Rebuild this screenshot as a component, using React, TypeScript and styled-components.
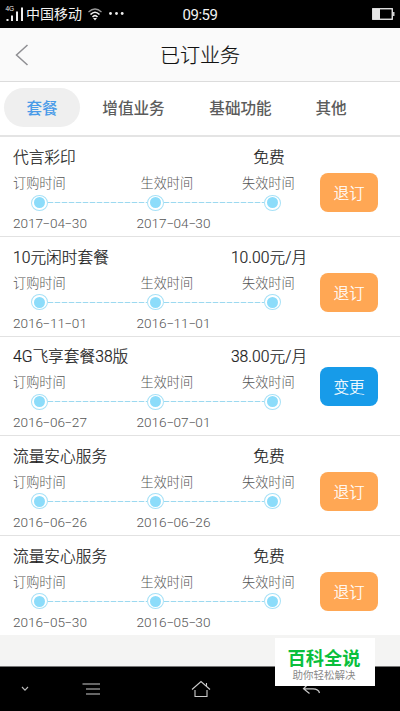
import React from "react";
import styled, { createGlobalStyle } from "styled-components";

const GlobalStyle = createGlobalStyle`
  * { box-sizing: border-box; }
  body {
    margin: 0;
    background: #000;
    font-family: "Noto Sans CJK SC", sans-serif;
  }
`;

const Screen = styled.div`
  width: 400px;
  height: 711px;
  display: flex;
  flex-direction: column;
  overflow: hidden;
  background: #f4f4f3;
`;

const StatusBar = styled.div`
  flex: none;
  height: 28px;
  display: grid;
  grid-template-columns: 1fr auto 1fr;
  align-items: center;
  padding: 0 5px;
  background: #000;
  color: #f2f2f2;
`;

const StatusLeft = styled.div`
  display: flex;
  align-items: center;
`;

const Carrier = styled.span`
  font-size: 14px;
  line-height: 24px;
  margin: 0 0 3px 2px;
  width: 62px;
  white-space: nowrap;
`;

const Clock = styled.span`
  font: 15px/26px Roboto, sans-serif;
  letter-spacing: -0.5px;
  padding-top: 1px;
`;

const StatusRight = styled.div`
  display: flex;
  justify-content: flex-end;
  padding-bottom: 1px;
`;

const Header = styled.header`
  flex: none;
  height: 54px;
  display: grid;
  grid-template-columns: 60px 1fr 60px;
  align-items: center;
  background: #fafafa;
  border-bottom: 1px solid #dcdcdc;
`;

const BackButton = styled.button`
  display: flex;
  padding: 0 0 0 15px;
  border: 0;
  background: none;
`;

const PageTitle = styled.h1`
  margin: 0;
  font-size: 20px;
  line-height: 52px;
  font-weight: 300;
  text-align: center;
  color: #111;
  -webkit-text-stroke: 0.2px #111;
`;

const Tabs = styled.nav`
  flex: none;
  height: 55px;
  display: flex;
  align-items: center;
  padding: 0 0 3px 4px;
  background: #fff;
  border-bottom: 2px solid #e4e4e4;
`;

const Tab = styled.button<{ $width: number; $active?: boolean }>`
  width: ${(p) => p.$width}px;
  height: 39px;
  padding: 0 0 1px;
  border: 0;
  border-radius: 20px;
  background: ${(p) => (p.$active ? "#efefef" : "transparent")};
  color: ${(p) => (p.$active ? "#4a9be8" : "#5c5c5c")};
  font: 500 15.6px/38px "Noto Sans CJK SC", sans-serif;
  white-space: nowrap;
`;

const List = styled.main`
  flex: none;
  background: #fff;
`;

const Row = styled.section<{ $first: boolean }>`
  height: ${(p) => (p.$first ? 100 : 99.7)}px;
  display: flex;
  padding: ${(p) => (p.$first ? 7 : 6.6)}px 0 0 13px;
  border-bottom: 1px solid #e2e2e2;
  &:last-child {
    height: 98.8px;
    border-bottom: 0;
  }
`;

const Details = styled.div`
  width: 307px;
`;

const NameLine = styled.div`
  display: grid;
  grid-template-columns: 205px 102px;
  height: 26px;
  line-height: 28.5px;
  font-family: Roboto, "Noto Sans CJK SC", sans-serif;
  font-size: 15.7px;
  font-weight: 300;
  color: #1c1c1c;
  -webkit-text-stroke: 0.2px #1c1c1c;
`;

const Name = styled.span`
  white-space: nowrap;
`;

const Price = styled.span`
  text-align: center;
  white-space: nowrap;
`;

const Labels = styled.div`
  display: grid;
  grid-template-columns: 127.5px 101.5px 60px;
  height: 25px;
  line-height: 25px;
  font-size: 13.2px;
  font-weight: 300;
  color: #555;
`;

const Track = styled.div`
  display: flex;
  align-items: center;
  height: 17px;
  margin-top: -1px;
  padding-left: 18px;
`;

const Dot = styled.i`
  flex: none;
  display: flex;
  width: 17px;
  height: 16px;
  padding: 1.5px 2px;
  border: 1px solid #a6e1f7;
  border-radius: 50%;
  background: #fff;
  &::before {
    content: "";
    flex: 1;
    border-radius: 50%;
    background: #8cdcfa;
  }
`;

const Dash = styled.i`
  width: 99.4px;
  height: 1px;
  background: repeating-linear-gradient(90deg, #9cd9f0 0 5px, #e4f5fb 5px 7px);
`;

const Dates = styled.div`
  display: grid;
  grid-template-columns: 123.5px 120px;
  height: 25px;
  line-height: 25px;
  font-family: Roboto, sans-serif;
  font-size: 13.6px;
  font-weight: 300;
  color: #555;
`;

const Hyphen = styled.span`
  display: inline-block;
  width: 6.8px;
  text-align: center;
  transform: scaleX(1.7);
`;

const Action = styled.button<{ $primary?: boolean; $top: number }>`
  width: 58px;
  height: 39px;
  margin-top: ${(p) => p.$top}px;
  padding: 0 0 1px;
  border: 0;
  border-radius: 8px;
  background: ${(p) => (p.$primary ? "#179be9" : "#ffa754")};
  color: #fff;
  font: 300 15.6px/38px "Noto Sans CJK SC", sans-serif;
  -webkit-text-stroke: 0.2px #fff;
`;

const Bottom = styled.footer`
  position: relative;
  margin-top: auto;
  flex: none;
  height: 45px;
  background: #000;
  border-top: 1px solid #777;
  display: grid;
  grid-template-columns: 29px 75px 107px 110px;
  align-items: center;
`;

const NavIcon = styled.span`
  display: flex;
  justify-content: flex-end;
`;

const Badge = styled.aside`
  position: absolute;
  left: 275px;
  top: -29px;
  width: 100px;
  height: 48px;
  display: flex;
  flex-direction: column;
  align-items: center;
  padding: 9px 2px 0 0;
  background: #fff;
  white-space: nowrap;
`;

const BadgeName = styled.div`
  font-size: 18.3px;
  line-height: 20px;
  font-weight: 700;
  color: #0abf3c;
`;

const BadgeNote = styled.div`
  margin-top: 1px;
  font-size: 10.5px;
  line-height: 13px;
  color: #888;
`;

interface Plan {
  name: string;
  price: string;
  start: string;
  effective: string;
  change?: boolean;
}

const plans: Plan[] = [
  { name: "代言彩印", price: "免费", start: "2017-04-30", effective: "2017-04-30" },
  { name: "10元闲时套餐", price: "10.00元/月", start: "2016-11-01", effective: "2016-11-01" },
  { name: "4G飞享套餐38版", price: "38.00元/月", start: "2016-06-27", effective: "2016-07-01", change: true },
  { name: "流量安心服务", price: "免费", start: "2016-06-26", effective: "2016-06-26" },
  { name: "流量安心服务", price: "免费", start: "2016-05-30", effective: "2016-05-30" },
];

function DateText({ value }: { value: string }) {
  const [year, month, day] = value.split("-");
  return (
    <span>
      {year}
      <Hyphen>-</Hyphen>
      {month}
      <Hyphen>-</Hyphen>
      {day}
    </span>
  );
}

function SignalIcon() {
  return (
    <svg width="19" height="18" viewBox="0 0 19 18" fill="#eee">
      <text x="0.5" y="6" fontSize="6.5" fontFamily="Liberation Sans">4G</text>
      <rect x="1.5" y="14" width="2" height="2" />
      <rect x="6" y="10.5" width="2" height="5.5" />
      <rect x="11" y="6.5" width="2" height="9.5" />
      <rect x="16" y="2.5" width="2" height="13.5" />
    </svg>
  );
}

function WifiIcon() {
  return (
    <svg width="36" height="14" viewBox="0 0 36 14" fill="none" stroke="#eee" strokeWidth="1.6">
      <path d="M0.5 5Q7 -1 13.5 5" stroke="#999" strokeWidth="1.2" />
      <path d="M2.5 7.5Q7 3 11.5 7.5" />
      <path d="M4.5 10Q7 7.3 9.5 10" />
      <path d="M5 11H9L7 13.5Z" fill="#eee" stroke="none" />
      <g fill="#eee" stroke="none">
        <circle cx="22.5" cy="6.5" r="1.4" />
        <circle cx="28.5" cy="6.5" r="1.4" />
        <circle cx="34.2" cy="6.5" r="1.4" />
      </g>
    </svg>
  );
}

export default function App() {
  return (
    <>
      <GlobalStyle />
      <Screen>
        <StatusBar>
          <StatusLeft>
            <SignalIcon />
            <Carrier>中国移动</Carrier>
            <WifiIcon />
          </StatusLeft>
          <Clock>09:59</Clock>
          <StatusRight>
            <svg width="23" height="12" viewBox="0 0 23 12">
              <rect x="0.75" y="0.75" width="19.5" height="10.5" fill="none" stroke="#f2f2f2" strokeWidth="1.3" />
              <rect x="1" y="1" width="7" height="10" fill="#e6e6e6" />
              <rect x="21" y="4" width="1.5" height="4" fill="#ccc" />
            </svg>
          </StatusRight>
        </StatusBar>
        <Header>
          <BackButton aria-label="返回">
            <svg width="14" height="22" viewBox="0 0 14 22" fill="none" stroke="#8f8f93" strokeWidth="1.5">
              <path d="M12.5 1L1.5 11L12.5 21" />
            </svg>
          </BackButton>
          <PageTitle>已订业务</PageTitle>
        </Header>
        <Tabs>
          <Tab $active $width={76}>套餐</Tab>
          <Tab $width={107}>增值业务</Tab>
          <Tab $width={107}>基础功能</Tab>
          <Tab $width={74}>其他</Tab>
        </Tabs>
        <List>
          {plans.map((plan, i) => (
            <Row key={i} $first={i === 0}>
              <Details>
                <NameLine>
                  <Name>{plan.name}</Name>
                  <Price>{plan.price}</Price>
                </NameLine>
                <Labels>
                  <span>订购时间</span>
                  <span>生效时间</span>
                  <span>失效时间</span>
                </Labels>
                <Track>
                  <Dot />
                  <Dash />
                  <Dot />
                  <Dash />
                  <Dot />
                </Track>
                <Dates>
                  <DateText value={plan.start} />
                  <DateText value={plan.effective} />
                </Dates>
              </Details>
              <Action $primary={plan.change} $top={plan.change ? 23.6 : 29}>
                {plan.change ? "变更" : "退订"}
              </Action>
            </Row>
          ))}
        </List>
        <Bottom>
          <NavIcon>
            <svg width="8" height="6" viewBox="0 0 8 6" fill="none" stroke="#bbb" strokeWidth="1.1">
              <path d="M1 1L4 4.2L7 1" />
            </svg>
          </NavIcon>
          <NavIcon>
            <svg width="22" height="12" viewBox="0 0 22 12" stroke="#ccc" strokeWidth="1.1">
              <path d="M0.5 1H18M4 6H18M4 11H18" />
            </svg>
          </NavIcon>
          <NavIcon>
            <svg width="20" height="18" viewBox="0 0 20 18" fill="none" stroke="#ccc" strokeWidth="1.1">
              <path d="M1 9.5L10 1.5L19 9.5M15.5 6V3M4 10V16.5H16V10" />
            </svg>
          </NavIcon>
          <NavIcon>
            <svg width="19" height="14" viewBox="0 0 19 14" fill="none" stroke="#ccc" strokeWidth="1.2">
              <path d="M6 2L1.5 6.8L7.5 11.5M1.5 6.8H11Q16.5 6.8 17.5 11" />
            </svg>
          </NavIcon>
          <Badge>
            <BadgeName>百科全说</BadgeName>
            <BadgeNote>助你轻松解决</BadgeNote>
          </Badge>
        </Bottom>
      </Screen>
    </>
  );
}
